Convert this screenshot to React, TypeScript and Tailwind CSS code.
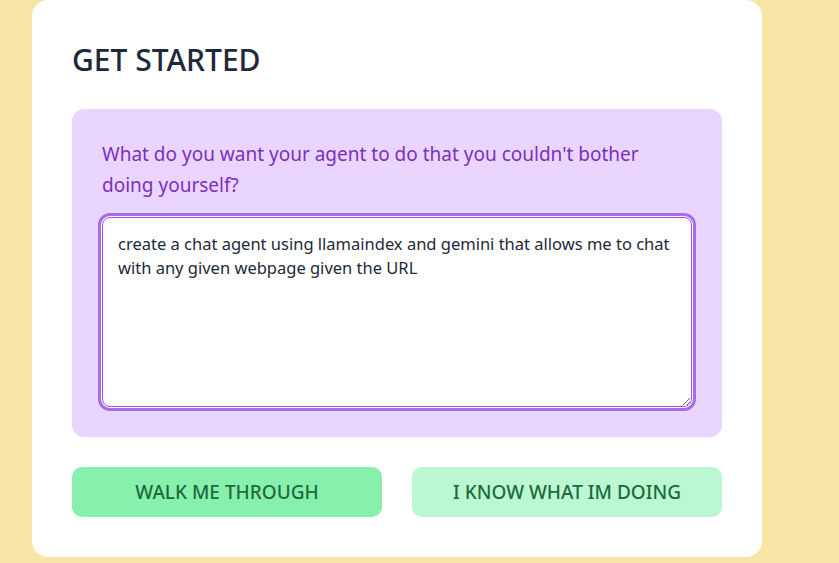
import { useState } from "react"

export default function App() {
  const [task, setTask] = useState(
    "create a chat agent using llamaindex and gemini that allows me to chat with any given webpage given the URL"
  )

  return (
    <div className="min-h-[563px] bg-[#f6e5a4] font-['Noto_Sans','Open_Sans',sans-serif]">
      <div className="ml-8 w-[730px] rounded-2xl bg-white px-10 pt-[42px] pb-10">
        <h1 className="mb-[31px] text-3xl font-medium text-gray-800">GET STARTED</h1>

        <div className="rounded-xl bg-[#e9d5ff] p-[30px]">
          <p className="mb-4 text-[19px] leading-[31px] text-[#7b2fbf]">
            What do you want your agent to do that you couldn't bother doing yourself?
          </p>
          <textarea
            value={task}
            onChange={(e) => setTask(e.target.value)}
            className="block h-[190px] w-full resize-y rounded-lg border border-purple-500 bg-white px-[15px] pt-3.5 pb-3 text-[16.5px] leading-6 text-gray-800 outline-none ring-[3px] ring-[#a46ee6] ring-offset-1"
          />
        </div>

        <div className="mt-[30px] flex gap-[30px]">
          <button className="h-[50px] flex-1 rounded-[10px] bg-[#88f0ad] text-[19px] font-medium text-[#1c6b3c]">
            WALK ME THROUGH
          </button>
          <button className="h-[50px] flex-1 rounded-[10px] bg-[#bbf7d0] text-[19px] font-medium text-[#1c6b3c]">
            I KNOW WHAT IM DOING
          </button>
        </div>
      </div>
    </div>
  )
}
